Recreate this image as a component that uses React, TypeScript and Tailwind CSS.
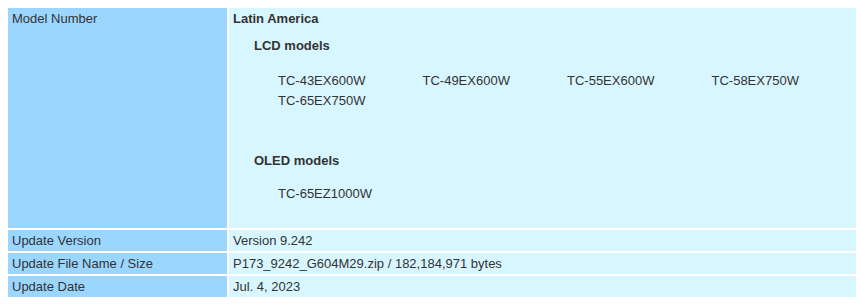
import React from "react";

const lcd = ["TC-43EX600W", "TC-49EX600W", "TC-55EX600W", "TC-58EX750W", "TC-65EX750W"];

function Row({ label, children }: { label: string; children: React.ReactNode }) {
  return (
    <>
      <div className="bg-[#9bd6fe] px-[4px] py-[1px]">{label}</div>
      <div className="bg-[#d8f6ff] px-[4px] py-[1px]">{children}</div>
    </>
  );
}

export default function App() {
  return (
    <div
      className="bg-white w-[862px] h-[308px] pt-[8px] pl-[8px] text-[13px] leading-[19px] text-[#333333]"
      style={{ fontFamily: '"Liberation Sans", Arial, sans-serif' }}
    >
      <div className="grid grid-cols-[219px_627px] gap-[2px] w-[848px]">
        <Row label="Model Number">
          <div className="font-bold">Latin America</div>
          <div className="pl-[21px]">
            <div className="font-bold mt-[8px]">LCD models</div>
            <div className="ml-[24px] mt-[16px] grid grid-cols-4 w-[578px] leading-[20px]">
              {lcd.map((m) => (
                <div key={m}>{m}</div>
              ))}
            </div>
            <div className="font-bold mt-[40px]">OLED models</div>
            <div className="pl-[24px] mt-[14px] pb-[24px]">TC-65EZ1000W</div>
          </div>
        </Row>
        <Row label="Update Version">Version 9.242</Row>
        <Row label="Update File Name / Size">P173_9242_G604M29.zip / 182,184,971 bytes</Row>
        <Row label="Update Date">Jul. 4, 2023</Row>
      </div>
    </div>
  );
}
